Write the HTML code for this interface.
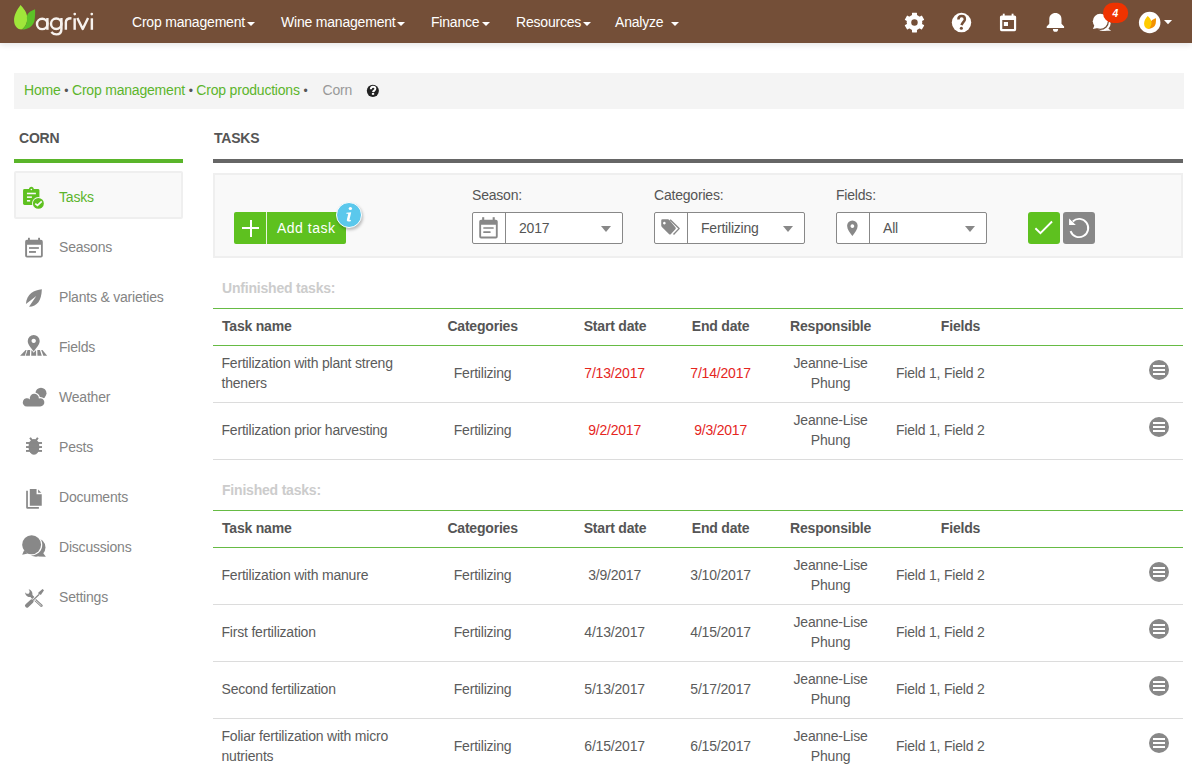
<!DOCTYPE html>
<html><head><meta charset="utf-8">
<style>
*{box-sizing:border-box;margin:0;padding:0}
html,body{width:1192px;height:770px;overflow:hidden;background:#fff;font-family:"Liberation Sans",sans-serif;font-size:14px;color:#555}
.a{position:absolute;white-space:nowrap;line-height:20px;letter-spacing:-0.2px}
#hdr{position:absolute;left:0;top:0;width:1192px;height:43px;background:#744f38;box-shadow:0 2px 6px rgba(0,0,0,.10)}
.nav{color:#fff}
.caret{position:absolute;width:0;height:0;border-left:4px solid transparent;border-right:4px solid transparent;border-top:4px solid #fff}
#bc{position:absolute;left:14px;top:73px;width:1170px;height:36px;background:#f4f4f4}
.g{color:#5cb52c}
.hl{position:absolute;left:213px;width:970px;height:1px}
.gl{background:#66bb44}
.grl{background:#dcdcdc}
.sect{font-weight:bold;color:#ccc}
.th{font-weight:bold;color:#555}
.c{width:120px;text-align:center}
.td{color:#5b5b5b}
.red{color:#e5261e}
.menu{position:absolute;width:20px;height:20px;border-radius:50%;background:#888}
.menu i{position:absolute;left:4px;width:12px;height:2px;background:#fff}
.side{color:#848484}
.side.g{color:#5cb52c}
.lbl{color:#555}
.sel{position:absolute;top:212px;width:151px;height:32px;border:1px solid #888;border-radius:2px;background:#fff}
.sel .ad{position:absolute;left:0;top:0;width:33px;height:30px;border-right:1px solid #888}
.sel .v{position:absolute;left:46px;top:5px;line-height:20px;color:#555;letter-spacing:-0.2px}
.sel .dd{position:absolute;left:128px;top:13px;width:0;height:0;border-left:5px solid transparent;border-right:5px solid transparent;border-top:6px solid #888}
</style></head><body>
<div id="hdr">
<svg style="position:absolute;left:0px;top:0px;" width="100" height="60" viewBox="0 0 1192 715">
      <path d="M245,60 C200,120 165,180 168,250 C172,320 220,355 262,350 C300,320 330,270 325,205 C318,140 280,100 245,60Z" fill="#a0e63a"/>
      <path d="M418,110 C360,130 320,160 320,210 C330,270 300,320 262,352 C330,350 390,320 410,250 C420,200 420,150 418,110Z" fill="#5cc227"/>
      <g fill="none" stroke="#f7f2ee" stroke-width="29">
        <circle cx="503" cy="285" r="62"/>
        <path d="M565,215 V355"/>
        <circle cx="670" cy="283" r="62"/>
        <path d="M732,215 V345 C732,390 705,410 672,410 C645,410 625,398 612,382"/>
        <path d="M785,355 V265 C785,235 810,218 852,218"/>
        <path d="M890,218 V355"/>
        <path d="M922,215 L986,345 L1050,215" stroke-linejoin="round"/>
        <path d="M1095,218 V355"/>
      </g>
      <circle cx="891" cy="168" r="16" fill="#f7f2ee"/>
      <circle cx="1094" cy="168" r="16" fill="#f7f2ee"/>
    </svg>
<svg style="position:absolute;left:895px;top:2px;" width="40" height="40" viewBox="0 0 770 770"><g fill="#fff"><circle cx="375" cy="395" r="150"/><rect x="327" y="205" width="96" height="80" rx="8" transform="rotate(0 375 395)"/><rect x="327" y="205" width="96" height="80" rx="8" transform="rotate(60 375 395)"/><rect x="327" y="205" width="96" height="80" rx="8" transform="rotate(120 375 395)"/><rect x="327" y="205" width="96" height="80" rx="8" transform="rotate(180 375 395)"/><rect x="327" y="205" width="96" height="80" rx="8" transform="rotate(240 375 395)"/><rect x="327" y="205" width="96" height="80" rx="8" transform="rotate(300 375 395)"/></g><circle cx="375" cy="395" r="62" fill="#744f38"/></svg>
<svg style="position:absolute;left:941px;top:2px;" width="40" height="40" viewBox="0 0 770 770"><circle cx="395" cy="395" r="187" fill="#fff"/>
      <path d="M335,335 C335,290 365,270 398,270 C435,270 460,295 460,330 C460,375 410,385 395,445" fill="none" stroke="#744f38" stroke-width="48"/>
      <circle cx="392" cy="505" r="30" fill="#744f38"/></svg>
<svg style="position:absolute;left:988px;top:2px;" width="40" height="40" viewBox="0 0 770 770"><path fill="#fff" fill-rule="evenodd" d="M262,258 H510 Q542,258 542,290 V530 Q542,562 510,562 H262 Q230,562 230,530 V290 Q230,258 262,258Z M275,345 V520 H500 V345Z"/>
      <rect x="285" y="225" width="36" height="45" fill="#fff"/><rect x="455" y="225" width="36" height="45" fill="#fff"/>
      <rect x="305" y="385" width="80" height="77" fill="#fff"/></svg>
<svg style="position:absolute;left:1035px;top:2px;" width="40" height="40" viewBox="0 0 770 770"><path fill="#fff" d="M225,502 H560 V470 L510,420 V330 C510,255 460,210 393,210 C325,210 275,255 275,330 V420 L225,470Z"/>
      <path fill="#fff" d="M345,520 A50,55 0 0 0 445,520Z"/></svg>
<svg style="position:absolute;left:1082px;top:0px;" width="50" height="42" viewBox="0 0 917 770">
      <circle cx="385" cy="430" r="140" fill="#fff"/>
      <path d="M470,520 L535,565 L380,565Z" fill="#fff"/>
      <circle cx="335" cy="390" r="160" fill="#744f38"/>
      <circle cx="335" cy="390" r="137" fill="#fff"/>
      <path d="M230,460 L200,532 L290,512Z" fill="#fff"/>
      <rect x="385" y="52" width="462" height="370" rx="185" fill="#ef3300"/>
      <text x="610" y="312" font-family="Liberation Sans" font-weight="bold" font-style="italic" font-size="190" fill="#fff" text-anchor="middle">4</text></svg>
<svg style="position:absolute;left:1132px;top:2px;" width="50" height="40" viewBox="0 0 962 770">
      <circle cx="340" cy="395" r="207" fill="#fff"/>
      <path fill="#f39200" d="M462,312 C410,330 360,350 345,420 C335,470 320,505 300,520 C380,520 440,480 455,420 C462,380 462,340 462,312Z"/>
      <path fill="#ffcc00" d="M300,268 C265,310 230,360 232,420 C235,480 270,520 318,520 C355,490 380,445 375,390 C370,330 330,290 300,268Z"/>
      <path fill="#fff" d="M615,345 H772 L693,427Z"/></svg>
  <div class="a nav" style="left:132px;top:12px">Crop management</div><div class="caret" style="left:247px;top:22px"></div>
  <div class="a nav" style="left:281px;top:12px">Wine management</div><div class="caret" style="left:397px;top:22px"></div>
  <div class="a nav" style="left:431px;top:12px">Finance</div><div class="caret" style="left:482px;top:22px"></div>
  <div class="a nav" style="left:516px;top:12px">Resources</div><div class="caret" style="left:583px;top:22px"></div>
  <div class="a nav" style="left:615px;top:12px">Analyze</div><div class="caret" style="left:671px;top:22px"></div>
</div>
<div id="bc"></div>
<div class="a" style="left:24px;top:80px"><span class="g">Home</span> <span style="color:#555;font-size:12px">&#8226;</span> <span class="g">Crop management</span> <span style="color:#555;font-size:12px">&#8226;</span> <span class="g">Crop productions</span> <span style="color:#555;font-size:12px">&#8226;</span> &nbsp;&nbsp;<span style="color:#999;margin-left:4px">Corn</span></div>


<div class="a th" style="left:19px;top:128px">CORN</div>
<div style="position:absolute;left:14px;top:159px;width:169px;height:4px;background:#5ab52a"></div>
<div style="position:absolute;left:14px;top:171px;width:169px;height:48px;background:#f9f9f9;border:2px solid #efefef;border-radius:2px"></div>
<div class="a side g" style="left:59px;top:187px">Tasks</div><div class="a side" style="left:59px;top:237px">Seasons</div><div class="a side" style="left:59px;top:287px">Plants &amp; varieties</div><div class="a side" style="left:59px;top:337px">Fields</div><div class="a side" style="left:59px;top:387px">Weather</div><div class="a side" style="left:59px;top:437px">Pests</div><div class="a side" style="left:59px;top:487px">Documents</div><div class="a side" style="left:59px;top:537px">Discussions</div><div class="a side" style="left:59px;top:587px">Settings</div>
<svg style="position:absolute;left:15px;top:180px;" width="40" height="40" viewBox="0 0 770 770">
      <rect x="155" y="172" width="315" height="308" rx="28" fill="#5ec11f"/>
      <path d="M268,180 C268,150 290,128 315,128 C340,128 362,150 362,180Z" fill="#5ec11f"/>
      <circle cx="315" cy="183" r="16" fill="#f9f9f9"/>
      <rect x="230" y="245" width="172" height="30" fill="#f9f9f9"/>
      <rect x="230" y="315" width="95" height="30" fill="#f9f9f9"/>
      <rect x="230" y="385" width="62" height="30" fill="#f9f9f9"/>
      <circle cx="450" cy="450" r="122" fill="#f9f9f9"/>
      <circle cx="450" cy="450" r="105" fill="#5ec11f"/>
      <path d="M390,455 L433,490 L515,412" fill="none" stroke="#f9f9f9" stroke-width="32"/>
    </svg>
<svg style="position:absolute;left:15px;top:230px;" width="40" height="40" viewBox="0 0 770 770">
      <path fill-rule="evenodd" fill="#888" d="M230,190 H500 Q535,190 535,225 V495 Q535,530 500,530 H230 Q195,530 195,495 V225 Q195,190 230,190Z M232,285 V498 H500 V285Z"/>
      <rect x="250" y="150" width="36" height="50" fill="#888"/>
      <rect x="445" y="150" width="36" height="50" fill="#888"/>
      <rect x="270" y="330" width="190" height="33" fill="#888"/>
      <rect x="270" y="405" width="133" height="35" fill="#888"/>
    </svg>
<svg style="position:absolute;left:15px;top:280px;" width="40" height="40" viewBox="0 0 770 770">
      <path fill="#888" d="M517,178 C370,195 225,265 210,462 L410,308 L270,517 C430,505 510,400 517,178Z"/>
    </svg>
<svg style="position:absolute;left:15px;top:330px;" width="40" height="40" viewBox="0 0 770 770">
      <path fill="#888" fill-rule="evenodd" d="M360,412 C300,335 245,280 245,212 A115,115 0 0 1 475,212 C475,280 420,335 360,412Z M360,168 A42,42 0 1 0 360.1,168Z"/>
      <path fill="#888" d="M98,498 L190,498 L222,385 L205,385Z"/>
      <path fill="#888" d="M205,498 L287,498 L292,385 L242,385Z"/>
      <path fill="#888" d="M312,498 L408,498 L405,395 L395,395 L360,440 L325,395 L315,395Z"/>
      <path fill="#888" d="M432,498 L515,498 L480,385 L430,385Z"/>
      <path fill="#888" d="M545,498 L620,498 L528,385 L505,385Z"/>
    </svg>
<svg style="position:absolute;left:15px;top:380px;" width="40" height="40" viewBox="0 0 770 770">
      <circle cx="500" cy="255" r="106" fill="#888"/>
      <path d="M230,510 A80,80 0 1 1 286.7,373.5 A88,88 0 1 1 460,354 A80,80 0 1 1 485,510Z" fill="#fff" stroke="#fff" stroke-width="44"/>
      <path d="M230,510 A80,80 0 1 1 286.7,373.5 A88,88 0 1 1 460,354 A80,80 0 1 1 485,510Z" fill="#888"/>
    </svg>
<svg style="position:absolute;left:15px;top:430px;" width="40" height="40" viewBox="0 0 770 770">
      <ellipse cx="365" cy="325" rx="105" ry="150" fill="#888"/>
      <rect x="212" y="232" width="308" height="36" fill="#888"/>
      <rect x="212" y="310" width="308" height="36" fill="#888"/>
      <rect x="212" y="385" width="308" height="36" fill="#888"/>
      <path d="M290,150 L330,205 M440,150 L400,205" stroke="#888" stroke-width="38"/>
    </svg>
<svg style="position:absolute;left:15px;top:480px;" width="40" height="40" viewBox="0 0 770 770">
      <path fill="#888" d="M285,175 H415 V275 H515 V495 H285Z"/>
      <path fill="#888" d="M445,185 L507,247 H445Z"/>
      <path fill="#888" d="M215,205 H248 V518 H460 V552 H240 Q215,552 215,527Z"/>
    </svg>
<svg style="position:absolute;left:15px;top:530px;" width="40" height="40" viewBox="0 0 770 770">
      <circle cx="405" cy="335" r="182" fill="#888"/>
      <path d="M530,430 L595,517 L450,510Z" fill="#888"/>
      <circle cx="320" cy="285" r="205" fill="#fff"/>
      <circle cx="320" cy="285" r="182" fill="#888"/>
      <path d="M175,390 L138,478 L250,450Z" fill="#888"/>
    </svg>
<svg style="position:absolute;left:15px;top:580px;" width="40" height="40" viewBox="0 0 770 770">
      <path d="M330,330 L510,495" stroke="#888" stroke-width="48" stroke-linecap="round"/>
      <path d="M340,345 L505,493" stroke="#fff" stroke-width="14" stroke-linecap="round"/>
      <path fill="#888" fill-rule="evenodd" d="M195,235 C195,300 250,335 300,325 L345,370 L380,335 L335,290 C345,235 310,180 255,178 L258,180 C285,200 290,235 268,258 C245,275 215,265 195,235Z"/>
      <path d="M335,400 L460,280" stroke="#fff" stroke-width="50"/>
      <path d="M338,397 L462,278" stroke="#888" stroke-width="26"/>
      <path d="M230,495 L320,410" stroke="#888" stroke-width="75" stroke-linecap="round"/>
      <path fill="#888" d="M450,240 L530,175 L558,198 L500,282 Q470,285 450,265Z"/>
    </svg>

<div class="a th" style="left:214px;top:128px">TASKS</div>
<div style="position:absolute;left:213px;top:159px;width:970px;height:4px;background:#666"></div>
<div style="position:absolute;left:213px;top:173px;width:970px;height:85px;background:#f9f9f9;border:2px solid #efefef"></div>

<div style="position:absolute;left:234px;top:212px;width:112px;height:32px;background:#5ec11f;border-radius:2px"></div>
<div style="position:absolute;left:266px;top:212px;width:1px;height:32px;background:#e8f5df"></div>
<div style="position:absolute;left:242px;top:227px;width:17px;height:2px;background:#fff"></div>
<div style="position:absolute;left:249.5px;top:219.5px;width:2px;height:17px;background:#fff"></div>
<div class="a" style="left:277px;top:218px;color:#fff;font-size:14px;letter-spacing:0.5px">Add task</div>
<div style="position:absolute;left:336px;top:201.5px;width:26px;height:26px;border-radius:50%;background:#5bc8ec;border:1.5px solid #fff;box-shadow:1px 2px 3px rgba(0,0,0,.25)"></div>

<div class="a lbl" style="left:472px;top:185px">Season:</div>
<div class="sel" style="left:472px"><div class="ad"></div><div class="v">2017</div><div class="dd"></div></div>
<div class="a lbl" style="left:654px;top:185px">Categories:</div>
<div class="sel" style="left:654px"><div class="ad"></div><div class="v">Fertilizing</div><div class="dd"></div></div>
<div class="a lbl" style="left:836px;top:185px">Fields:</div>
<div class="sel" style="left:836px"><div class="ad"></div><div class="v">All</div><div class="dd"></div></div>

<div style="position:absolute;left:1028px;top:212px;width:32px;height:32px;background:#5ec11f;border-radius:3px"></div>
<div style="position:absolute;left:1063px;top:212px;width:32px;height:32px;background:#888;border-radius:3px"></div>

<svg style="position:absolute;left:473px;top:212px;" width="35" height="32" viewBox="0 0 842 770">
      <path fill="#888" fill-rule="evenodd" d="M195,185 H550 Q595,185 595,230 V590 Q595,635 550,635 H195 Q150,635 150,590 V230 Q150,185 195,185Z M195,305 V590 H550 V305Z"/>
      <rect x="220" y="125" width="50" height="70" fill="#888"/><rect x="473" y="125" width="50" height="70" fill="#888"/>
      <rect x="245" y="365" width="255" height="40" rx="12" fill="#888"/>
      <rect x="245" y="465" width="180" height="40" rx="12" fill="#888"/></svg>
<svg style="position:absolute;left:655px;top:212px;" width="35" height="32" viewBox="0 0 842 770">
      <path fill="#888" fill-rule="evenodd" d="M180,175 H310 Q330,175 345,192 L495,370 Q510,395 490,418 L385,530 Q360,555 335,530 L165,360 Q150,345 150,325 V205 Q150,175 180,175Z M225,235 A32,32 0 1 0 225.1,235Z"/>
      <path d="M365,185 L580,400 L445,540" fill="none" stroke="#888" stroke-width="34" stroke-linejoin="round"/></svg>
<svg style="position:absolute;left:837px;top:212px;" width="35" height="32" viewBox="0 0 842 770">
      <path fill="#888" fill-rule="evenodd" d="M370,578 C310,500 243,420 243,330 A127,127 0 0 1 497,330 C497,420 430,500 370,578Z M370,295 A45,45 0 1 0 370.1,295Z"/></svg>
<svg style="position:absolute;left:1025px;top:208px;" width="75" height="40" viewBox="0 0 1192 636">
      <path d="M165,322 L245,402 L430,215" fill="none" stroke="#fff" stroke-width="30"/>
      <path d="M759,214 A145,145 0 1 1 724,368" fill="none" stroke="#fff" stroke-width="30"/>
      <path d="M700,168 L700,272 L808,272Z" fill="#fff"/></svg>
<svg style="position:absolute;left:330px;top:198px;" width="40" height="40" viewBox="0 0 770 770">
      <ellipse cx="392" cy="203" rx="33" ry="30" fill="#fff"/>
      <path fill="#fff" d="M318,282 L408,272 L375,418 Q378,428 405,420 L398,446 Q360,455 335,448 Q318,440 325,415 L352,305 L314,305Z"/></svg>
<svg style="position:absolute;left:300px;top:75px;" width="90" height="30" viewBox="0 0 1192 397">
      <circle cx="965" cy="210" r="80" fill="#222"/>
      <path d="M938,190 C938,165 950,155 967,155 C985,155 998,167 998,182 C998,205 970,207 967,228" fill="none" stroke="#fff" stroke-width="26"/>
      <rect x="952" y="238" width="30" height="24" fill="#fff"/></svg>
<div class="a sect" style="left:222px;top:278px">Unfinished tasks:</div>
<div class="hl gl" style="top:308px"></div>
<div class="a th" style="left:222px;top:316px">Task name</div>
<div class="a th c" style="left:422.6px;top:316px">Categories</div>
<div class="a th c" style="left:555px;top:316px">Start date</div>
<div class="a th c" style="left:660.6px;top:316px">End date</div>
<div class="a th c" style="left:770.6px;top:316px">Responsible</div>
<div class="a th c" style="left:900.5px;top:316px">Fields</div>
<div class="hl gl" style="top:345px"></div>
<div class="a td" style="left:221.5px;top:353px">Fertilization with plant streng<br>theners</div>
<div class="a td c" style="left:422.6px;top:363px">Fertilizing</div>
<div class="a td c red" style="left:554.6px;top:363px">7/13/2017</div>
<div class="a td c red" style="left:660.6px;top:363px">7/14/2017</div>
<div class="a td c" style="left:770.6px;top:353px">Jeanne-Lise<br>Phung</div>
<div class="a td" style="left:896px;top:363px">Field 1, Field 2</div>
<div class="menu" style="left:1149px;top:360px"><i style="top:5px"></i><i style="top:9px"></i><i style="top:13px"></i></div>
<div class="hl grl" style="top:402px"></div>
<div class="a td" style="left:221.5px;top:420px">Fertilization prior harvesting</div>
<div class="a td c" style="left:422.6px;top:420px">Fertilizing</div>
<div class="a td c red" style="left:554.6px;top:420px">9/2/2017</div>
<div class="a td c red" style="left:660.6px;top:420px">9/3/2017</div>
<div class="a td c" style="left:770.6px;top:410px">Jeanne-Lise<br>Phung</div>
<div class="a td" style="left:896px;top:420px">Field 1, Field 2</div>
<div class="menu" style="left:1149px;top:417px"><i style="top:5px"></i><i style="top:9px"></i><i style="top:13px"></i></div>
<div class="hl grl" style="top:459px"></div>
<div class="a sect" style="left:222px;top:480px">Finished tasks:</div>
<div class="hl gl" style="top:510px"></div>
<div class="a th" style="left:222px;top:518px">Task name</div>
<div class="a th c" style="left:422.6px;top:518px">Categories</div>
<div class="a th c" style="left:555px;top:518px">Start date</div>
<div class="a th c" style="left:660.6px;top:518px">End date</div>
<div class="a th c" style="left:770.6px;top:518px">Responsible</div>
<div class="a th c" style="left:900.5px;top:518px">Fields</div>
<div class="hl gl" style="top:547px"></div>
<div class="a td" style="left:221.5px;top:565px">Fertilization with manure</div>
<div class="a td c" style="left:422.6px;top:565px">Fertilizing</div>
<div class="a td c" style="left:554.6px;top:565px">3/9/2017</div>
<div class="a td c" style="left:660.6px;top:565px">3/10/2017</div>
<div class="a td c" style="left:770.6px;top:555px">Jeanne-Lise<br>Phung</div>
<div class="a td" style="left:896px;top:565px">Field 1, Field 2</div>
<div class="menu" style="left:1149px;top:562px"><i style="top:5px"></i><i style="top:9px"></i><i style="top:13px"></i></div>
<div class="hl grl" style="top:604px"></div>
<div class="a td" style="left:221.5px;top:622px">First fertilization</div>
<div class="a td c" style="left:422.6px;top:622px">Fertilizing</div>
<div class="a td c" style="left:554.6px;top:622px">4/13/2017</div>
<div class="a td c" style="left:660.6px;top:622px">4/15/2017</div>
<div class="a td c" style="left:770.6px;top:612px">Jeanne-Lise<br>Phung</div>
<div class="a td" style="left:896px;top:622px">Field 1, Field 2</div>
<div class="menu" style="left:1149px;top:619px"><i style="top:5px"></i><i style="top:9px"></i><i style="top:13px"></i></div>
<div class="hl grl" style="top:661px"></div>
<div class="a td" style="left:221.5px;top:679px">Second fertilization</div>
<div class="a td c" style="left:422.6px;top:679px">Fertilizing</div>
<div class="a td c" style="left:554.6px;top:679px">5/13/2017</div>
<div class="a td c" style="left:660.6px;top:679px">5/17/2017</div>
<div class="a td c" style="left:770.6px;top:669px">Jeanne-Lise<br>Phung</div>
<div class="a td" style="left:896px;top:679px">Field 1, Field 2</div>
<div class="menu" style="left:1149px;top:676px"><i style="top:5px"></i><i style="top:9px"></i><i style="top:13px"></i></div>
<div class="hl grl" style="top:718px"></div>
<div class="a td" style="left:221.5px;top:726px">Foliar fertilization with micro<br>nutrients</div>
<div class="a td c" style="left:422.6px;top:736px">Fertilizing</div>
<div class="a td c" style="left:554.6px;top:736px">6/15/2017</div>
<div class="a td c" style="left:660.6px;top:736px">6/15/2017</div>
<div class="a td c" style="left:770.6px;top:726px">Jeanne-Lise<br>Phung</div>
<div class="a td" style="left:896px;top:736px">Field 1, Field 2</div>
<div class="menu" style="left:1149px;top:733px"><i style="top:5px"></i><i style="top:9px"></i><i style="top:13px"></i></div>
<div class="hl grl" style="top:775px"></div>
</body></html>
